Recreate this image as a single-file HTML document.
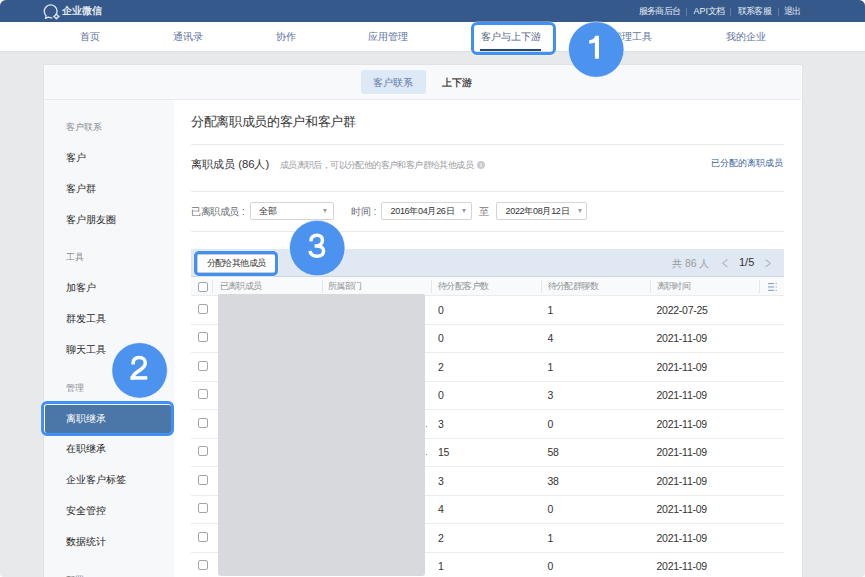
<!DOCTYPE html>
<html><head><meta charset="utf-8">
<style>
*{margin:0;padding:0;box-sizing:border-box}
html,body{width:865px;height:577px;overflow:hidden;background:#fff}
body{font-family:"Liberation Sans",sans-serif;position:relative}
.abs{position:absolute;white-space:nowrap}
#frame{position:absolute;left:0;top:0;width:865px;height:577px;background:#e8e9eb;border-radius:6px 6px 4px 4px;overflow:hidden}
#top{position:absolute;left:0;top:0;width:865px;height:22px;background:#34598a;box-shadow:0 0.5px 1px rgba(44,76,118,0.5)}
#nav{position:absolute;left:0;top:22px;width:865px;height:30px;background:#fff;border-bottom:1px solid #dfe0e3}
.nv{position:absolute;top:30.7px;font-size:10px;line-height:12px;color:#5a71a0;white-space:nowrap}
.tl{position:absolute;top:6px;font-size:9px;line-height:10px;color:#e9eef5;font-weight:500;white-space:nowrap;letter-spacing:-0.55px}
.sep{position:absolute;top:8.3px;width:1px;height:7.5px;background:#62809f}
#card{position:absolute;left:43px;top:64px;width:759.6px;height:530px;background:#fff;border:1px solid #e1e2e5;border-radius:3px;overflow:hidden}
#chead{position:absolute;left:0;top:0;width:757px;height:35px;background:#f8f9fb;border-bottom:1px solid #e9eaed}
#side{position:absolute;left:0;top:35px;width:130px;height:500px;background:#f7f8fa}
.sl{position:absolute;left:66px;font-size:9px;line-height:11px;color:#8a8d92;white-space:nowrap;margin-top:0.8px}
.si{position:absolute;left:66px;font-size:10px;line-height:12px;color:#262626;white-space:nowrap}
.hr{position:absolute;height:1px;background:#e9eaed}
.box{position:absolute;height:18px;border:1px solid #d3d5d9;border-radius:2px;background:#fff}
.arr{position:absolute;width:0;height:0;border-left:2.5px solid transparent;border-right:2.5px solid transparent;border-top:4px solid #9a9da3}
.ol{position:absolute;border:3px solid #4290f2;border-radius:6px;box-shadow:0 0 0 0.6px rgba(255,255,255,0.6)}
.cb{position:absolute;left:198px;width:10px;height:10px;border:1px solid #a3a5a9;border-radius:2px;background:#fff}
.th{position:absolute;top:281px;font-size:9px;line-height:10px;color:#8e9196;white-space:nowrap;letter-spacing:-0.6px}
.cd{position:absolute;top:280px;width:1px;height:12.5px;background:#e6e7ea;margin-left:-0.6px}
.rb{position:absolute;left:191px;width:593px;height:1px;background:#ececef}
.td{position:absolute;font-size:10.5px;line-height:12px;color:#333;letter-spacing:-0.25px;white-space:nowrap}
.lbl{position:absolute;top:205.5px;font-size:10px;line-height:12px;color:#6b6e73;white-space:nowrap;letter-spacing:-0.42px}
.dt{position:absolute;top:205.5px;font-size:9px;line-height:11px;color:#333;letter-spacing:-0.3px;white-space:nowrap}
</style></head><body>
<div id="frame">
  <div id="top"></div>
  <svg class="abs" style="left:40px;top:2.8px" width="25" height="19" viewBox="0 0 25 19">
    <path d="M15.6 12.4 A6.4 6.4 0 1 0 6.2 12.9 L5.4 15.4 L8.4 14.2 C9.7 14.7 11 14.9 12.4 14.8" fill="none" stroke="#dfe6ef" stroke-width="1.35" stroke-linejoin="round"/>
    <path d="M16.4 11.2 L18.6 13.4 L16.4 15.6 L14.2 13.4 Z" fill="none" stroke="#dfe6ef" stroke-width="1.1"/>
    <circle cx="16.4" cy="11.2" r="1" fill="#dfe6ef"/><circle cx="18.6" cy="13.4" r="1" fill="#dfe6ef"/><circle cx="16.4" cy="15.6" r="1" fill="#dfe6ef"/><circle cx="14.2" cy="13.4" r="1" fill="#dfe6ef"/>
  </svg>
  <div class="abs" style="left:62px;top:4.5px;font-size:10px;line-height:12px;color:#e3e8f0;font-weight:bold">企业微信</div>
  <div class="tl" style="left:638.5px">服务商后台</div>
  <div class="sep" style="left:686px"></div>
  <div class="tl" style="left:693.5px"><span style="letter-spacing:0">API</span>文档</div>
  <div class="sep" style="left:730px"></div>
  <div class="tl" style="left:737.5px">联系客服</div>
  <div class="sep" style="left:778px"></div>
  <div class="tl" style="left:784px">退出</div>

  <div id="nav"></div>
  <div class="nv" style="left:80px">首页</div>
  <div class="nv" style="left:172.5px">通讯录</div>
  <div class="nv" style="left:275.5px">协作</div>
  <div class="nv" style="left:368px">应用管理</div>
  <div class="nv" style="left:480.5px;color:#505f80">客户与上下游</div>
  <div class="abs" style="left:480px;top:48.6px;width:61px;height:2px;background:#244a7c"></div>
  <div class="nv" style="left:612px">管理工具</div>
  <div class="nv" style="left:725.5px">我的企业</div>

  <div id="card">
    <div id="chead"></div>
    <div id="side"></div>
  </div>
  <div class="abs" style="left:361px;top:70px;width:64.5px;height:24px;background:#dee9f7;border-radius:3px"></div>
  <div class="abs" style="left:373px;top:76.5px;font-size:10px;line-height:12px;color:#5878ab">客户联系</div>
  <div class="abs" style="left:442px;top:76.5px;font-size:10px;line-height:12px;color:#2e2e2e;-webkit-text-stroke:0.25px #2e2e2e">上下游</div>

  <div class="sl" style="top:121px">客户联系</div>
  <div class="si" style="top:152px">客户</div>
  <div class="si" style="top:182.5px">客户群</div>
  <div class="si" style="top:213.5px">客户朋友圈</div>
  <div class="sl" style="top:251px">工具</div>
  <div class="si" style="top:282px">加客户</div>
  <div class="si" style="top:312.5px">群发工具</div>
  <div class="si" style="top:343.5px">聊天工具</div>
  <div class="sl" style="top:382px">管理</div>
  <div class="abs" style="left:45px;top:404.5px;width:125.5px;height:28.5px;background:#4a76a8;border-radius:2px"></div>
  <div class="ol" style="left:41.2px;top:401.2px;width:132.8px;height:34.9px"></div>
  <div class="si" style="top:413px;color:#fff">离职继承</div>
  <div class="si" style="top:443px">在职继承</div>
  <div class="si" style="top:474px">企业客户标签</div>
  <div class="si" style="top:504.5px">安全管控</div>
  <div class="si" style="top:535.5px">数据统计</div>
  <div class="sl" style="top:574px;color:#777">配置</div>

  <div class="abs" style="left:191px;top:114.3px;font-size:13px;line-height:16px;color:#383838;letter-spacing:-0.34px">分配离职成员的客户和客户群</div>
  <div class="hr" style="left:191px;top:144px;width:593px"></div>
  <div class="abs" style="left:191px;top:156.5px;font-size:11.3px;line-height:14px;color:#333">离职成员 (86人)</div>
  <div class="abs" style="left:279.8px;top:159.5px;font-size:9px;line-height:11px;color:#9a9ca1;letter-spacing:-0.6px">成员离职后，可以分配他的客户和客户群给其他成员</div>
  <div class="abs" style="left:477px;top:161px;width:8px;height:8px;border-radius:50%;background:#c9cbcf;color:#fff;font-size:6px;line-height:8px;text-align:center;font-weight:bold">i</div>
  <div class="abs" style="left:711px;top:158px;font-size:9px;line-height:11px;color:#36639f">已分配的离职成员</div>
  <div class="hr" style="left:191px;top:191px;width:593px"></div>

  <div class="lbl" style="left:191px">已离职成员</div><div class="abs" style="left:242px;top:205.5px;font-size:10px;line-height:12px;color:#6b6e73">:</div>
  <div class="box" style="left:250px;top:202px;width:84px"></div>
  <div class="abs" style="left:258.5px;top:205.5px;font-size:9px;line-height:11px;color:#333">全部</div>
  <div class="arr" style="left:323px;top:209px"></div>
  <div class="lbl" style="left:351px">时间</div><div class="abs" style="left:373.5px;top:205.5px;font-size:10px;line-height:12px;color:#6b6e73">:</div>
  <div class="box" style="left:380.7px;top:202px;width:91.8px"></div>
  <div class="dt" style="left:390.5px">2016年04月26日</div>
  <div class="arr" style="left:462px;top:209px"></div>
  <div class="abs" style="left:479px;top:206px;font-size:10px;line-height:12px;color:#777">至</div>
  <div class="box" style="left:495.7px;top:202px;width:91.8px"></div>
  <div class="dt" style="left:505.5px">2022年08月12日</div>
  <div class="arr" style="left:577.5px;top:209px"></div>
  <div class="hr" style="left:191px;top:231px;width:593px"></div>

  <div class="abs" style="left:191px;top:249px;width:593px;height:27.5px;background:#dfe8f3;border-bottom:1px solid #ccd6e3"></div>
  <div class="abs" style="left:197px;top:254px;width:78.5px;height:18.5px;background:#fff;border:1px solid #c9ccd1;border-radius:2px"></div>
  <div class="abs" style="left:206.5px;top:258px;font-size:9px;line-height:10px;color:#333;letter-spacing:-0.57px">分配给其他成员</div>
  <div class="ol" style="left:193.8px;top:250.6px;width:84.6px;height:25.4px;border-radius:5px"></div>
  <div class="abs" style="left:672px;top:256.5px;font-size:10.4px;line-height:13px;color:#9a9ca0">共 86 人</div>
  <div class="abs" style="left:739px;top:256px;font-size:11px;line-height:13px;color:#333">1/5</div>
  <svg class="abs" style="left:0;top:0" width="865" height="577">
    <polyline points="727.3,259.5 722.8,263.2 727.3,267" fill="none" stroke="#b4b8be" stroke-width="1.1"/>
    <polyline points="765.6,259.5 770.3,263.2 765.6,267" fill="none" stroke="#b4b8be" stroke-width="1.1"/>
  </svg>

  <div class="abs" style="left:191px;top:276.5px;width:593px;height:18.5px;background:#f9fafb"></div>
  <div class="rb" style="top:295px"></div>
  <div class="cb" style="top:281.5px"></div>
  <div class="cd" style="left:213px"></div>
  <div class="th" style="left:219.5px">已离职成员</div>
  <div class="cd" style="left:322.5px"></div>
  <div class="th" style="left:328px">所属部门</div>
  <div class="cd" style="left:432px"></div>
  <div class="th" style="left:438px">待分配客户数</div>
  <div class="cd" style="left:541.5px"></div>
  <div class="th" style="left:547.5px">待分配群聊数</div>
  <div class="cd" style="left:650.5px"></div>
  <div class="th" style="left:656.5px">离职时间</div>
  <div class="cd" style="left:760px"></div>
  <svg class="abs" style="left:767px;top:282px" width="11" height="10" viewBox="0 0 11 10">
    <g fill="#8a9fba"><rect x="1" y="1" width="6" height="1.1"/><rect x="1" y="4.4" width="6" height="1.1"/><rect x="1" y="7.8" width="6" height="1.1"/>
    <rect x="8.6" y="1" width="1.1" height="1.1"/><rect x="8.6" y="4.4" width="1.1" height="1.1"/><rect x="8.6" y="7.8" width="1.1" height="1.1"/></g>
  </svg>
  <div class="cb" style="top:303.5px"></div>
  <div class="td" style="left:438px;top:303.7px">0</div>
  <div class="td" style="left:547.5px;top:303.7px">1</div>
  <div class="td" style="left:656.5px;top:303.7px">2022-07-25</div>
  <div class="rb" style="top:323.5px"></div>
  <div class="cb" style="top:332.0px"></div>
  <div class="td" style="left:438px;top:332.2px">0</div>
  <div class="td" style="left:547.5px;top:332.2px">4</div>
  <div class="td" style="left:656.5px;top:332.2px">2021-11-09</div>
  <div class="rb" style="top:352.0px"></div>
  <div class="cb" style="top:360.5px"></div>
  <div class="td" style="left:438px;top:360.7px">2</div>
  <div class="td" style="left:547.5px;top:360.7px">1</div>
  <div class="td" style="left:656.5px;top:360.7px">2021-11-09</div>
  <div class="rb" style="top:380.5px"></div>
  <div class="cb" style="top:389.0px"></div>
  <div class="td" style="left:438px;top:389.2px">0</div>
  <div class="td" style="left:547.5px;top:389.2px">3</div>
  <div class="td" style="left:656.5px;top:389.2px">2021-11-09</div>
  <div class="rb" style="top:409.0px"></div>
  <div class="cb" style="top:417.5px"></div>
  <div class="td" style="left:438px;top:417.7px">3</div>
  <div class="td" style="left:547.5px;top:417.7px">0</div>
  <div class="td" style="left:656.5px;top:417.7px">2021-11-09</div>
  <div class="rb" style="top:437.5px"></div>
  <div class="cb" style="top:446.0px"></div>
  <div class="td" style="left:438px;top:446.2px">15</div>
  <div class="td" style="left:547.5px;top:446.2px">58</div>
  <div class="td" style="left:656.5px;top:446.2px">2021-11-09</div>
  <div class="rb" style="top:466.0px"></div>
  <div class="cb" style="top:474.5px"></div>
  <div class="td" style="left:438px;top:474.7px">3</div>
  <div class="td" style="left:547.5px;top:474.7px">38</div>
  <div class="td" style="left:656.5px;top:474.7px">2021-11-09</div>
  <div class="rb" style="top:494.5px"></div>
  <div class="cb" style="top:503.0px"></div>
  <div class="td" style="left:438px;top:503.2px">4</div>
  <div class="td" style="left:547.5px;top:503.2px">0</div>
  <div class="td" style="left:656.5px;top:503.2px">2021-11-09</div>
  <div class="rb" style="top:523.0px"></div>
  <div class="cb" style="top:531.5px"></div>
  <div class="td" style="left:438px;top:531.7px">2</div>
  <div class="td" style="left:547.5px;top:531.7px">1</div>
  <div class="td" style="left:656.5px;top:531.7px">2021-11-09</div>
  <div class="rb" style="top:551.5px"></div>
  <div class="cb" style="top:560.0px"></div>
  <div class="td" style="left:438px;top:560.2px">1</div>
  <div class="td" style="left:547.5px;top:560.2px">0</div>
  <div class="td" style="left:656.5px;top:560.2px">2021-11-09</div>
  <div class="rb" style="top:580.0px"></div>
  <div class="abs" style="left:218.3px;top:294.2px;width:206.5px;height:282px;background:#d8d9dc;border-radius:2px 2px 3px 3px"></div>

  <div class="abs" style="left:425.8px;top:425.8px;width:1.2px;height:1.2px;background:#6d8fc4"></div><div class="abs" style="left:425.8px;top:454.3px;width:1.2px;height:1.2px;background:#6d8fc4"></div>
  <div class="ol" style="left:470.8px;top:22.3px;width:85px;height:33px"></div>
  <svg class="abs" style="left:0;top:0" width="865" height="577">
    <g fill="#4b93ef" stroke="rgba(255,255,255,0.7)" stroke-width="0.8">
      <circle cx="596.2" cy="49.5" r="27.75"/>
      <circle cx="139.6" cy="370.4" r="27.75"/>
      <circle cx="317.2" cy="248.1" r="27.75"/>
    </g>
    <path d="M594.9 58.8 L594.9 42.2 C593.3 43.2 591.2 43.6 589.2 43.6 L589.2 40.2 C592.3 40.1 594.5 38.6 595.3 35.8 L599.0 35.8 L599.0 58.8 Z" fill="#fff"/>
    <g fill="none" stroke="#fff" stroke-width="3.5">
      <path d="M133.1 364.6 L133.1 363.3 C133.2 359.5 135.6 357.5 139.3 357.5 C142.9 357.5 145.3 359.8 145.3 363 C145.3 366 143.5 367.6 140.5 369.7 C136 372.8 132.3 374.6 132.3 379.7"/>
      <path d="M130.5 377.9 L147.3 377.9"/>
      <path d="M310.8 241.3 C311 237.5 313.4 235.2 317 235.2 C320.4 235.2 322.5 237.3 322.5 240.1 C322.5 243.3 320 245.9 316.5 245.9 L314.6 245.9 M316.5 245.9 C320.7 245.9 323.6 247.8 323.6 251 C323.6 254.3 320.8 256.3 316.9 256.3 C312.8 256.3 310.2 254 310.1 250.9"/>
    </g>
  </svg>
</div>
</body></html>
